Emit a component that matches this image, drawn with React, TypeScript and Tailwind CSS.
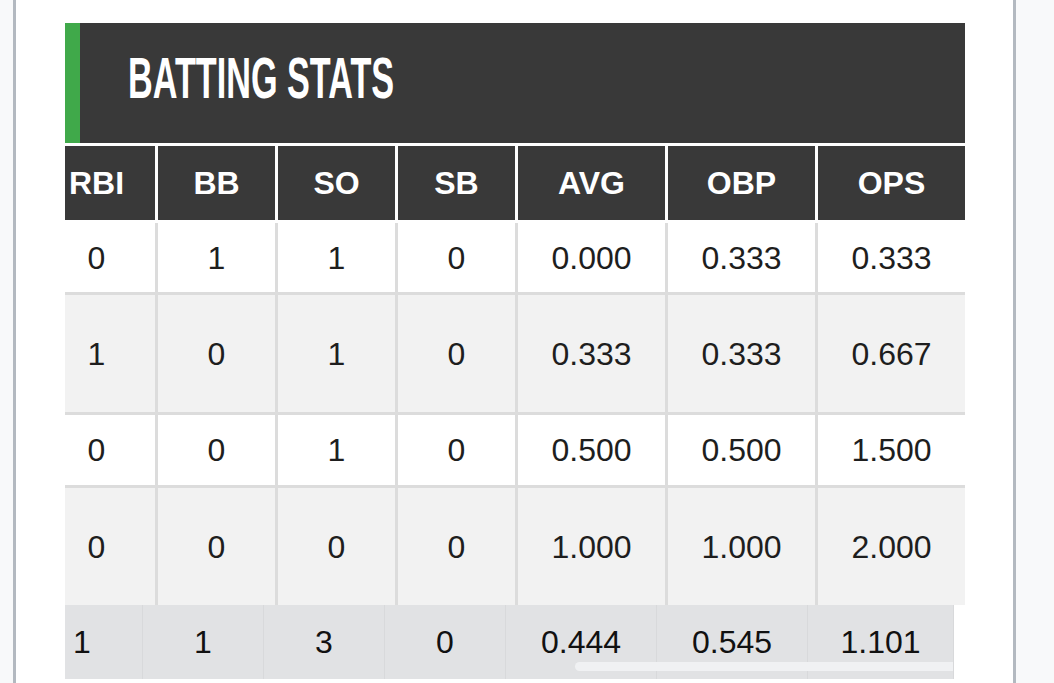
const columns = [
  { label: 'RBI', width: 'w-[117px]', footWidth: 'w-[121px]' },
  { label: 'BB', width: 'w-[117px]', footWidth: 'w-[121px]' },
  { label: 'SO', width: 'w-[117px]', footWidth: 'w-[121px]' },
  { label: 'SB', width: 'w-[117px]', footWidth: 'w-[121px]' },
  { label: 'AVG', width: 'w-[147px]', footWidth: 'w-[151px]' },
  { label: 'OBP', width: 'w-[147px]', footWidth: 'w-[151px]' },
  { label: 'OPS', width: 'w-[147px]', footWidth: 'w-[146px]' },
]

const rows = [
  { height: 'h-[69px]', bg: 'bg-white', values: ['0', '1', '1', '0', '0.000', '0.333', '0.333'] },
  { height: 'h-[117px]', bg: 'bg-[#f2f2f2]', values: ['1', '0', '1', '0', '0.333', '0.333', '0.667'] },
  { height: 'h-[70px]', bg: 'bg-white', values: ['0', '0', '1', '0', '0.500', '0.500', '1.500'] },
  { height: 'h-[117px]', bg: 'bg-[#f2f2f2]', values: ['0', '0', '0', '0', '1.000', '1.000', '2.000'] },
]

const totals = ['1', '1', '3', '0', '0.444', '0.545', '1.101']

export default function App() {
  return (
    <div className="flex h-[683px] w-[1054px] overflow-hidden bg-white font-['Liberation_Sans',Arial,sans-serif]">
      <div className="w-[13px] shrink-0 bg-[#f8f9fa]" />
      <div className="w-[3px] shrink-0 bg-[#b3b9c0]" />

      <main className="flex-1 pl-[49px] pt-[23px]">
        <div className="w-[900px] overflow-hidden">
          {/* title bar */}
          <div className="h-[120px] border-l-[15px] border-[#40a94a] bg-[#393939] pl-[48px] pt-[26px]">
            <h2 className="origin-left scale-x-[0.59] whitespace-nowrap text-[58px] font-bold leading-none text-white">
              BATTING STATS
            </h2>
          </div>

          {/* table, scrolled a little to the left */}
          <div className="-ml-[27px] mt-[3px]">
            <div className="flex gap-[3px]">
              {columns.map((col) => (
                <div
                  key={col.label}
                  className={`${col.width} flex h-[74px] shrink-0 items-center justify-center bg-[#393939] text-[32px] font-bold text-white`}
                >
                  {col.label}
                </div>
              ))}
            </div>

            <div className="mt-[3px] flex flex-col gap-[3px] bg-[#dcdcdc]">
              {rows.map((row, i) => (
                <div key={i} className="flex gap-[3px]">
                  {row.values.map((v, j) => (
                    <div
                      key={j}
                      className={`${columns[j].width} ${row.height} ${row.bg} flex shrink-0 items-center justify-center text-[32px] text-[#1e1e1e]`}
                    >
                      {v}
                    </div>
                  ))}
                </div>
              ))}
            </div>
          </div>

          {/* totals row */}
          <div className="relative -ml-[43px] flex w-[931px] bg-[#e1e2e4]">
            {totals.map((v, j) => (
              <div
                key={j}
                className={`${columns[j].footWidth} flex h-[74px] shrink-0 items-center justify-center border-r border-[#d8d9db] text-[32px] text-[#111] last:border-r-0`}
              >
                {v}
              </div>
            ))}
            <div className="absolute left-[553px] top-[57px] h-[9px] w-[378px] rounded-l-full bg-[#f0f1f3]" />
          </div>
        </div>
      </main>

      <div className="w-[3px] shrink-0 bg-[#b3b9c0]" />
      <div className="w-[38px] shrink-0 bg-[#f8f9fa]" />
    </div>
  )
}
